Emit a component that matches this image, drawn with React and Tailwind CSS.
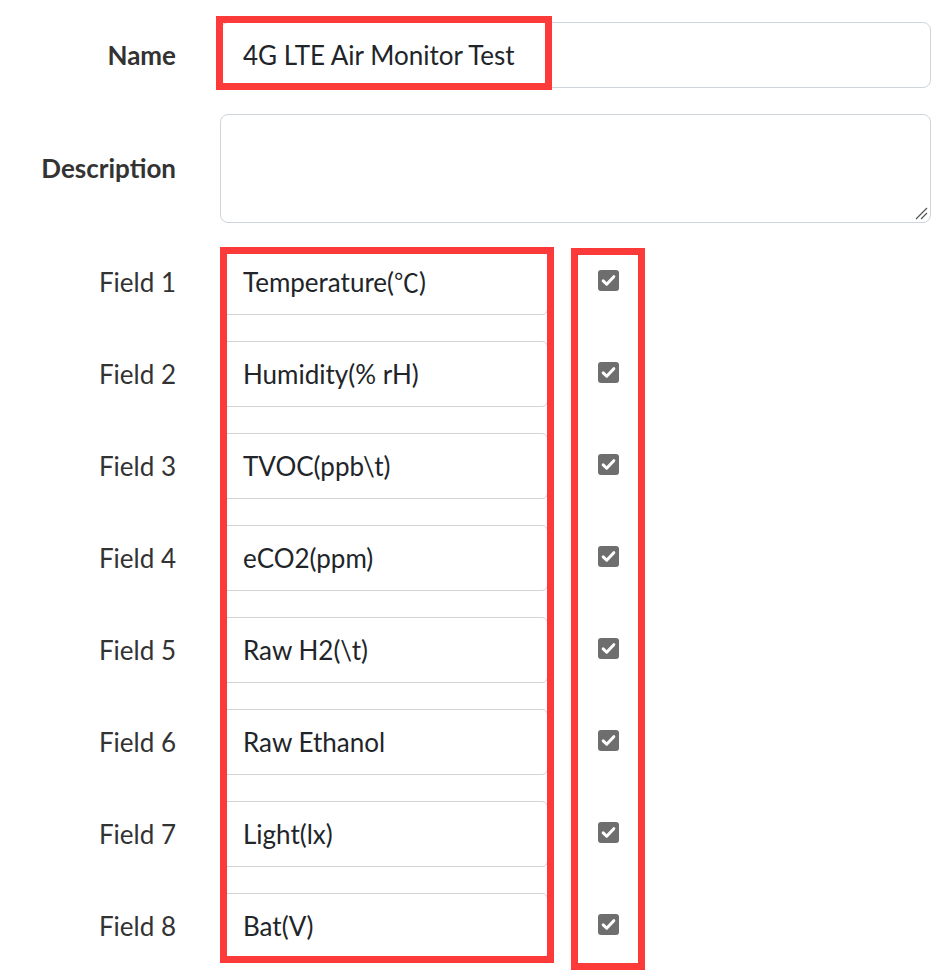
import React from "react";

const fields = [
  null,
  "Humidity(% rH)",
  "TVOC(ppb\\t)",
  "eCO2(ppm)",
  "Raw H2(\\t)",
  "Raw Ethanol",
  "Light(lx)",
  "Bat(V)",
];

function Check() {
  return (
    <div className="w-[21px] h-[21px] rounded-[3px] bg-[#6e6e6e] flex items-center justify-center">
      <svg width="17" height="17" viewBox="0 0 16 16">
        <path d="M3 8.3 L6.3 11.5 L13 4.4" fill="none" stroke="#fff" strokeWidth="2.8" strokeLinecap="round" strokeLinejoin="round" />
      </svg>
    </div>
  );
}

export default function App() {
  return (
    <div
      className="relative w-[945px] h-[980px] bg-white text-[#212529]"
      style={{ fontFamily: "Lato, 'Noto Sans', sans-serif" }}
    >
      <div className="pt-[22px] pr-[14px] flex flex-col gap-[26px]">
        <div className="flex items-center">
          <div className="w-[176px] text-right font-bold text-[26px] text-[#333]">Name</div>
          <div className="ml-[44px] flex-1 h-[66px] border border-[#ced4da] rounded-[8px] flex items-center pl-[22px] text-[26px]">
            4G LTE Air Monitor Test
          </div>
        </div>
        <div className="flex items-center">
          <div className="w-[176px] text-right font-bold text-[26px] text-[#333]">Description</div>
          <div className="relative ml-[44px] flex-1 h-[109px] border border-[#ced4da] rounded-[8px]">
            <svg className="absolute right-[2px] bottom-[2px]" width="14" height="14" viewBox="0 0 14 14">
              <path d="M2 13 L13 2 M7 13 L13 7" stroke="#555" strokeWidth="1.2" />
            </svg>
          </div>
        </div>
        {fields.map((f, i) => (
          <div key={i} className="flex items-center">
            <div className="w-[176px] text-right text-[26px] text-[#333]">Field {i + 1}</div>
            <div className="ml-[44px] w-[328px] h-[66px] border border-[#d4d4d4] rounded-[6px] flex items-center pl-[22px] text-[26px]">
              {f === null ? (
                <span>
                  Temperature(
                  <span style={{ fontFamily: "'Noto Sans CJK SC', sans-serif" }} className="text-[25px]">℃</span>)
                </span>
              ) : (
                f
              )}
            </div>
            <div className="ml-[50px] -mt-[4px]">
              <Check />
            </div>
          </div>
        ))}
      </div>

      <div className="absolute left-[216px] top-[16px] w-[336px] h-[74px] border-[7px] border-[#fd3a3a]" />
      <div className="absolute left-[220px] top-[247px] w-[334px] h-[716px] border-[7px] border-[#fd3a3a]" />
      <div className="absolute left-[571px] top-[248px] w-[74px] h-[722px] border-[7px] border-[#fd3a3a]" />
    </div>
  );
}
